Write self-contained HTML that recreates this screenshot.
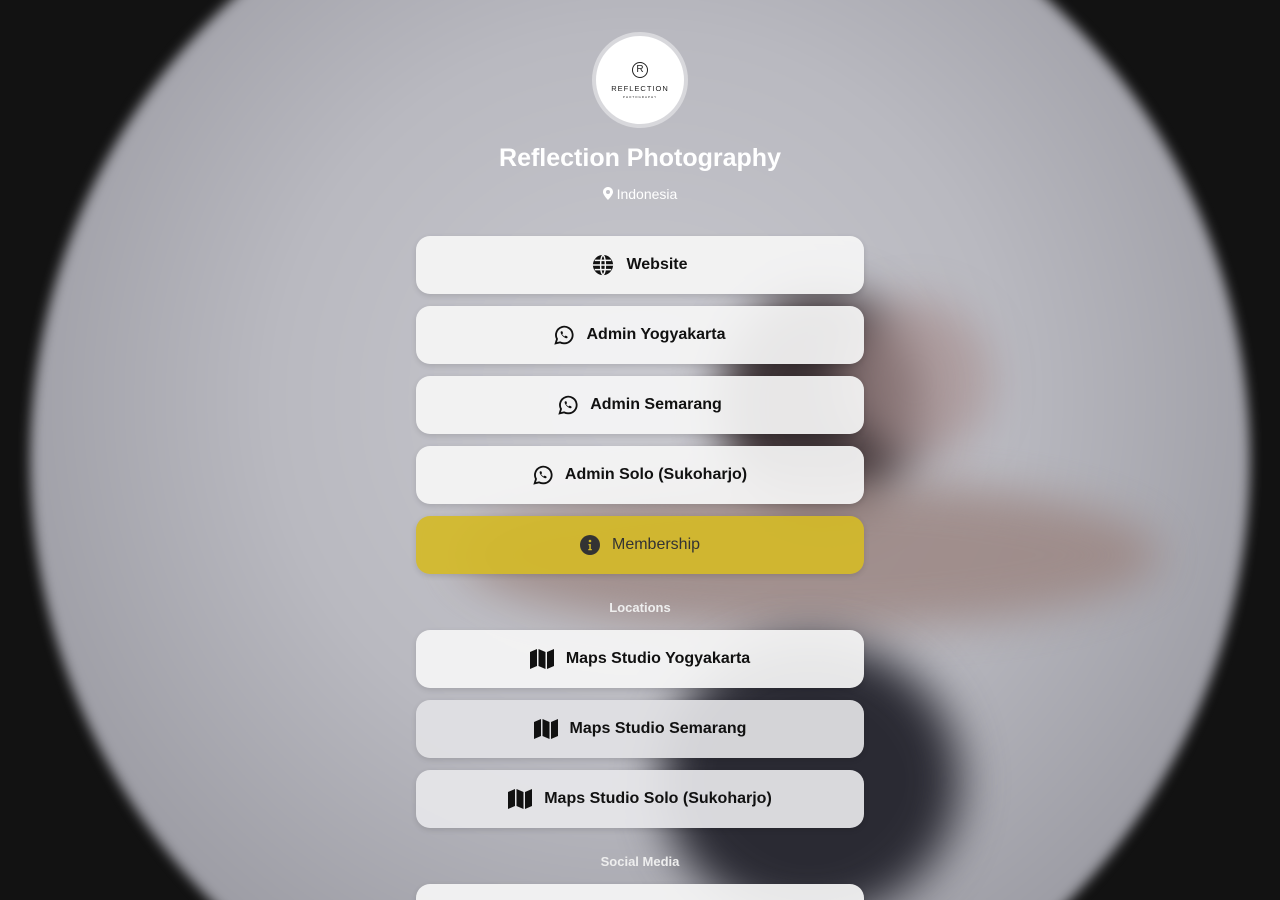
<!DOCTYPE html>
<html><head><meta charset="utf-8"><style>
*{box-sizing:border-box;margin:0;padding:0}
html,body{width:1280px;height:900px;overflow:hidden}
body{background:#121212;font-family:"Liberation Sans",sans-serif;position:relative}
.bg{position:absolute;left:30px;top:-160px;width:1220px;height:1240px;border-radius:50%;background:radial-gradient(circle at 50% 45%,#c8c8ce 0%,#b9b9c0 40%,#9a9aa2 75%,#55555a 100%);filter:blur(6px)}
.blob{position:absolute;filter:blur(22px);border-radius:50%}
.avatar{position:absolute;left:592px;top:32px;width:96px;height:96px;border-radius:50%;background:#fff;border:4px solid #d8d8dc;text-align:center}
.avatar .r{position:absolute;left:36px;top:26px;width:16px;height:16px;border:1.3px solid #222;border-radius:50%;font-size:10px;line-height:13px;color:#222}
.avatar .t{position:absolute;left:0;width:88px;top:48px;font-size:7.5px;letter-spacing:1px;color:#222}
.avatar .s{position:absolute;left:0;width:88px;top:59px;font-size:3px;letter-spacing:1px;color:#222}
h1{position:absolute;left:0;width:1280px;top:144px;font-size:25px;font-weight:bold;color:#fff;text-align:center}
.loc{position:absolute;left:0;width:1280px;top:186px;font-size:14px;color:#fff;text-align:center}
.btn{position:absolute;left:416px;width:448px;height:58px;border-radius:14px;background:rgba(245,245,245,.93);box-shadow:0 2px 6px rgba(0,0,0,.12);display:flex;align-items:center;justify-content:center;font-size:16px;font-weight:bold;color:#111}
.btn svg{margin-right:12px}
.y{background:rgba(212,186,40,.92);color:#333;font-weight:normal}
.sec{position:absolute;left:0;width:1280px;text-align:center;font-size:13px;font-weight:bold;color:#eee}
</style></head><body>
<div class="bg"></div>
<div class="blob" style="left:720px;top:290px;width:200px;height:230px;background:#3a3033"></div>
<div class="blob" style="left:460px;top:480px;width:700px;height:150px;background:#9a8480;opacity:.8"></div>
<div class="blob" style="left:840px;top:300px;width:150px;height:160px;background:#a89090;opacity:.7"></div>
<div class="blob" style="left:660px;top:640px;width:300px;height:280px;background:#2a2a33"></div>
<div class="avatar"><div class="r">R</div><div class="t">REFLECTION</div><div class="s">PHOTOGRAPHY</div></div>
<h1>Reflection Photography</h1>
<div class="loc"><svg width="10" height="13" viewBox="0 0 10 13" style="vertical-align:-1px"><path d="M5 0C2.2 0 0 2.2 0 5c0 3 5 8 5 8s5-5 5-8C10 2.2 7.8 0 5 0zm0 7a2 2 0 110-4 2 2 0 010 4z" fill="#fff"/></svg> Indonesia</div>

<div class="btn" style="top:236px"><svg width="22" height="22" viewBox="0 0 24 24"><circle cx="12" cy="12" r="11" fill="#111"/><path d="M1 12h22M12 1c3.5 3 3.5 19 0 22M12 1c-3.5 3-3.5 19 0 22M3 7h18M3 17h18" stroke="#f4f4f4" stroke-width="1.6" fill="none"/></svg>Website</div>
<div class="btn" style="top:306px"><svg width="20" height="20" viewBox="0 0 24 24"><path d="M2 22l1.6-5.2A10 10 0 1112 22a10 10 0 01-4.8-1.2z" stroke="#111" stroke-width="2.2" fill="none"/><path d="M8.5 7.5c-1.2 1 -.3 3.5 2 5.8s4.8 3.2 5.8 2l-.4-1.8-2.2-.8-1.1 1.1c-1.1-.5-2.3-1.7-2.8-2.8l1.1-1.1-.8-2.2z" fill="#111"/></svg>Admin Yogyakarta</div>
<div class="btn" style="top:376px"><svg width="20" height="20" viewBox="0 0 24 24"><path d="M2 22l1.6-5.2A10 10 0 1112 22a10 10 0 01-4.8-1.2z" stroke="#111" stroke-width="2.2" fill="none"/><path d="M8.5 7.5c-1.2 1 -.3 3.5 2 5.8s4.8 3.2 5.8 2l-.4-1.8-2.2-.8-1.1 1.1c-1.1-.5-2.3-1.7-2.8-2.8l1.1-1.1-.8-2.2z" fill="#111"/></svg>Admin Semarang</div>
<div class="btn" style="top:446px"><svg width="20" height="20" viewBox="0 0 24 24"><path d="M2 22l1.6-5.2A10 10 0 1112 22a10 10 0 01-4.8-1.2z" stroke="#111" stroke-width="2.2" fill="none"/><path d="M8.5 7.5c-1.2 1 -.3 3.5 2 5.8s4.8 3.2 5.8 2l-.4-1.8-2.2-.8-1.1 1.1c-1.1-.5-2.3-1.7-2.8-2.8l1.1-1.1-.8-2.2z" fill="#111"/></svg>Admin Solo (Sukoharjo)</div>
<div class="btn y" style="top:516px"><svg width="20" height="20" viewBox="0 0 20 20"><circle cx="10" cy="10" r="10" fill="#333"/><circle cx="10" cy="6" r="1.3" fill="#d4ba28"/><path d="M8.5 9h2.3v5h1v1.2h-3.5V14h1v-3.8h-.8z" fill="#d4ba28"/></svg>Membership</div>
<div class="sec" style="top:600px">Locations</div>
<div class="btn" style="top:630px"><svg width="24" height="20" viewBox="0 0 24 20"><path d="M0 3l7-3v17l-7 3zM8.5 0l7 3v17l-7-3zM17 3l7-3v17l-7 3z" fill="#111"/></svg>Maps Studio Yogyakarta</div>
<div class="btn" style="top:700px;background:rgba(225,225,228,.93)"><svg width="24" height="20" viewBox="0 0 24 20"><path d="M0 3l7-3v17l-7 3zM8.5 0l7 3v17l-7-3zM17 3l7-3v17l-7 3z" fill="#111"/></svg>Maps Studio Semarang</div>
<div class="btn" style="top:770px;background:rgba(230,230,233,.93)"><svg width="24" height="20" viewBox="0 0 24 20"><path d="M0 3l7-3v17l-7 3zM8.5 0l7 3v17l-7-3zM17 3l7-3v17l-7 3z" fill="#111"/></svg>Maps Studio Solo (Sukoharjo)</div>
<div class="sec" style="top:854px">Social Media</div>
<div class="btn" style="top:884px;height:16px;border-radius:14px 14px 0 0"></div>
</body></html>
